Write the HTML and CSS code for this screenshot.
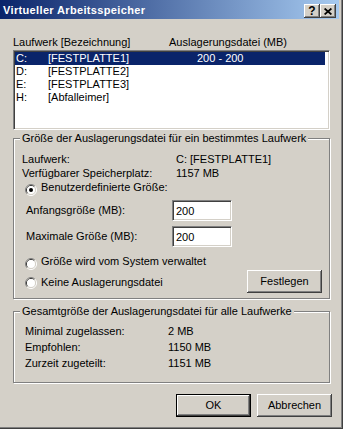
FILE: index.html
```html
<!DOCTYPE html>
<html lang="de">
<head>
    <meta charset="UTF-8" />
    <title>Virtueller Arbeitsspeicher</title>
    <link rel="stylesheet" href="styles.css">
</head>
<body>
<div class="window">
    <div class="titlebar">
        <span class="title">Virtueller Arbeitsspeicher</span>
        <div class="caption-buttons">
            <span class="caption-btn help">?</span>
            <span class="caption-btn close">
                <svg width="8" height="7" viewBox="0 0 8 7">
                    <path d="M0.6 0.5 L7.4 6.5 M7.4 0.5 L0.6 6.5" stroke="#000" stroke-width="1.7" fill="none" />
                </svg>
            </span>
        </div>
    </div>

    <div class="content">
        <div class="list-header">
            <span class="header-drive">Laufwerk [Bezeichnung]</span>
            <span>Auslagerungsdatei (MB)</span>
        </div>
        <div class="listbox">
            <div class="list-row selected">
                <span class="col-letter">C:</span>
                <span class="col-label">[FESTPLATTE1]</span>
                <span>200 - 200</span>
            </div>
            <div class="list-row">
                <span class="col-letter">D:</span>
                <span class="col-label">[FESTPLATTE2]</span>
            </div>
            <div class="list-row">
                <span class="col-letter">E:</span>
                <span class="col-label">[FESTPLATTE3]</span>
            </div>
            <div class="list-row">
                <span class="col-letter">H:</span>
                <span class="col-label">[Abfalleimer]</span>
            </div>
        </div>

        <fieldset class="group group-drive">
            <legend>Größe der Auslagerungsdatei für ein bestimmtes Laufwerk</legend>
            <div class="info-row">
                <span class="info-label">Laufwerk:</span>
                <span>C: [FESTPLATTE1]</span>
            </div>
            <div class="info-row second">
                <span class="info-label">Verfügbarer Speicherplatz:</span>
                <span>1157 MB</span>
            </div>

            <div class="radio-row custom">
                <svg class="radio" width="12" height="12" viewBox="0 0 12 12">
                    <path d="M2.11 9.89 A5.5 5.5 0 0 1 9.89 2.11" stroke="#808080" fill="none" />
                    <path d="M9.89 2.11 A5.5 5.5 0 0 1 2.11 9.89" stroke="#fff" fill="none" />
                    <path d="M2.82 9.18 A4.5 4.5 0 0 1 9.18 2.82" stroke="#404040" fill="none" />
                    <path d="M9.18 2.82 A4.5 4.5 0 0 1 2.82 9.18" stroke="#d4d0c8" fill="none" />
                    <circle cx="6" cy="6" r="4" fill="#fff" />
                    <circle cx="6" cy="6" r="2" fill="#000" />
                </svg>
                <span>Benutzerdefinierte Größe:</span>
            </div>
            <div class="field-row initial">
                <label class="field-label" for="initial">Anfangsgröße (MB):</label>
                <input class="edit" id="initial" type="text" value="200" />
            </div>
            <div class="field-row maximum">
                <label class="field-label" for="maximum">Maximale Größe (MB):</label>
                <input class="edit" id="maximum" type="text" value="200" />
            </div>

            <div class="radio-row system">
                <svg class="radio" width="12" height="12" viewBox="0 0 12 12">
                    <path d="M2.11 9.89 A5.5 5.5 0 0 1 9.89 2.11" stroke="#808080" fill="none" />
                    <path d="M9.89 2.11 A5.5 5.5 0 0 1 2.11 9.89" stroke="#fff" fill="none" />
                    <path d="M2.82 9.18 A4.5 4.5 0 0 1 9.18 2.82" stroke="#404040" fill="none" />
                    <path d="M9.18 2.82 A4.5 4.5 0 0 1 2.82 9.18" stroke="#d4d0c8" fill="none" />
                    <circle cx="6" cy="6" r="4" fill="#fff" />
                </svg>
                <span>Größe wird vom System verwaltet</span>
            </div>
            <div class="radio-row none">
                <svg class="radio" width="12" height="12" viewBox="0 0 12 12">
                    <path d="M2.11 9.89 A5.5 5.5 0 0 1 9.89 2.11" stroke="#808080" fill="none" />
                    <path d="M9.89 2.11 A5.5 5.5 0 0 1 2.11 9.89" stroke="#fff" fill="none" />
                    <path d="M2.82 9.18 A4.5 4.5 0 0 1 9.18 2.82" stroke="#404040" fill="none" />
                    <path d="M9.18 2.82 A4.5 4.5 0 0 1 2.82 9.18" stroke="#d4d0c8" fill="none" />
                    <circle cx="6" cy="6" r="4" fill="#fff" />
                </svg>
                <span class="radio-text">Keine Auslagerungsdatei</span>
                <button class="btn set-btn" type="button">Festlegen</button>
            </div>
        </fieldset>

        <fieldset class="group group-total">
            <legend>Gesamtgröße der Auslagerungsdatei für alle Laufwerke</legend>
            <div class="total-row">
                <span class="total-label">Minimal zugelassen:</span>
                <span>2 MB</span>
            </div>
            <div class="total-row">
                <span class="total-label">Empfohlen:</span>
                <span>1150 MB</span>
            </div>
            <div class="total-row">
                <span class="total-label">Zurzeit zugeteilt:</span>
                <span>1151 MB</span>
            </div>
        </fieldset>

        <div class="dialog-buttons">
            <button class="btn default" type="button">OK</button>
            <button class="btn" type="button">Abbrechen</button>
        </div>
    </div>
</div>
</body>
</html>
```

FILE: styles.css
```css
body {
    margin: 0;
    background: #d4d0c8;
}

.window {
    width: 343px;
    height: 429px;
    box-sizing: border-box;
    background: #d4d0c8;
    box-shadow: inset -1px -1px #404040, inset -2px -2px #808080;
    font-family: "Liberation Sans", Arial, sans-serif;
    font-size: 11px;
    line-height: 13px;
    color: #000;
}

/* title bar */

.titlebar {
    height: 19px;
    margin-right: 4px;
    padding: 0 3px;
    display: flex;
    justify-content: space-between;
    align-items: flex-start;
    background: linear-gradient(to right, #0a246a, #a6caf0);
}

.title {
    margin-top: 4px;
    color: #fff;
    font-weight: bold;
    letter-spacing: 0.35px;
}

.caption-buttons {
    display: flex;
    margin-top: 4px;
}

.caption-btn {
    width: 16px;
    height: 14px;
    box-sizing: border-box;
    display: flex;
    justify-content: center;
    align-items: center;
    background: #d4d0c8;
    box-shadow: inset -1px -1px #404040, inset 1px 1px #fff, inset -2px -2px #808080;
}

.caption-btn.help {
    font-weight: bold;
    font-size: 12px;
    padding-top: 1px;
}

/* content */

.content {
    padding: 17px 13px 0 13px;
}

.list-header {
    display: flex;
    height: 13px;
}

.header-drive {
    width: 156px;
}

.listbox {
    margin-top: 1px;
    height: 80px;
    box-sizing: border-box;
    background: #fff;
    border: 1px solid;
    border-color: #808080 #fff #fff #808080;
    box-shadow: inset 1px 1px #404040, inset -1px -1px #d4d0c8;
    padding: 1px;
}

.list-row {
    display: flex;
    height: 13px;
    margin-right: 3px;
}

.list-row.selected {
    background: #0a246a;
    color: #fff;
}

.col-letter {
    width: 33px;
    padding-left: 1px;
    box-sizing: border-box;
}

.col-label {
    width: 149px;
}

/* group boxes */

.group {
    margin: 0;
    min-width: 0;
    border: 1px solid #808080;
    box-shadow: inset 1px 1px #fff, 1px 1px #fff;
}

.group legend {
    padding: 0 2px;
    background: #d4d0c8;
    line-height: 13px;
}

.group-drive {
    margin-top: 2px;
    padding: 8px 7px 5px 8px;
}

.group-drive legend {
    margin-left: -2px;
}

.info-row {
    display: flex;
    height: 13px;
}

.info-row.second {
    margin-top: 1px;
}

.info-label {
    width: 154px;
}

.radio-row {
    display: flex;
    align-items: flex-start;
    margin-left: 3px;
    height: 15px;
}

.radio {
    margin: 3px 4px 0 0;
    flex: none;
}

.radio-row.custom {
    margin-top: 1px;
}

.radio-row.system {
    margin-top: 8px;
}

.radio-row.none {
    height: 23px;
}

.radio-row.none .radio {
    margin-top: 7px;
}

.radio-row.none .radio-text {
    margin-top: 6px;
}

.field-row {
    display: flex;
    align-items: center;
    height: 21px;
}

.field-row.initial {
    margin-top: 4px;
}

.field-row.maximum {
    margin-top: 5px;
}

.field-label {
    width: 146px;
    margin-left: 4px;
}

.edit {
    width: 60px;
    height: 21px;
    margin: 0;
    padding: 0 3px;
    box-sizing: border-box;
    border: 1px solid;
    border-color: #808080 #fff #fff #808080;
    box-shadow: inset 1px 1px #404040, inset -1px -1px #d4d0c8;
    background: #fff;
    font: inherit;
    color: #000;
    outline: none;
}

.group-total {
    margin-top: 6px;
    padding: 7px 7px 12px 11px;
}

.group-total legend {
    margin-left: -5px;
}

.total-row {
    display: flex;
    height: 13px;
}

.total-row + .total-row {
    margin-top: 3px;
}

.total-label {
    width: 143px;
}

/* buttons */

.btn {
    width: 75px;
    height: 23px;
    box-sizing: border-box;
    margin: 0;
    padding: 0;
    border: 0;
    background: #d4d0c8;
    box-shadow: inset -1px -1px #404040, inset 1px 1px #fff, inset -2px -2px #808080;
    font: inherit;
    color: #000;
}

.btn.default {
    border: 1px solid #000;
}

.set-btn {
    margin-left: auto;
}

.dialog-buttons {
    display: flex;
    justify-content: flex-end;
    gap: 6px;
    margin-top: 11px;
    margin-right: -2px;
}
```
